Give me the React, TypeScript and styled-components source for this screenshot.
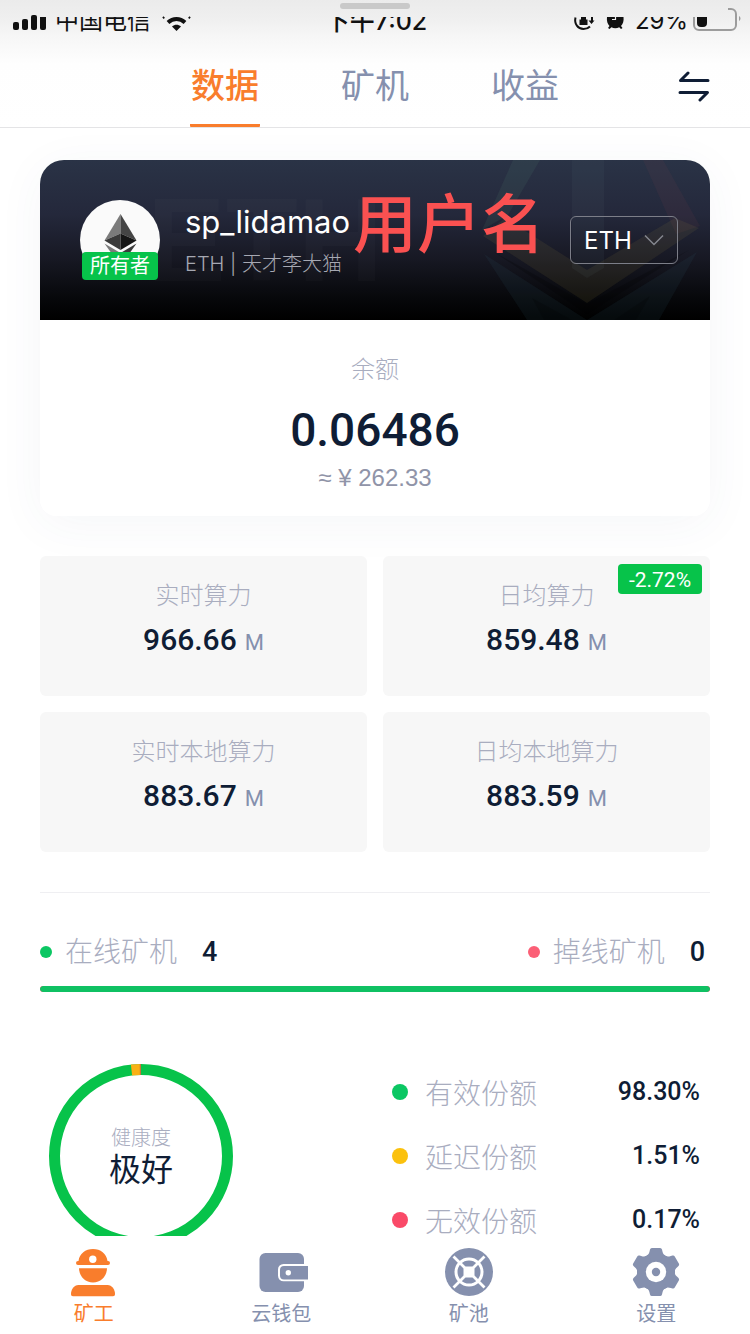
import React from "react";
import styled, { createGlobalStyle } from "styled-components";

const ink = "#0f1d35";
const slate = "#8590ae";
const pale = "#a9adbf";
const orange = "#f97d2c";
const green = "#07c34a";
const textFont = '"Inter", "Noto Sans CJK SC", sans-serif';
const numberFont = '"Roboto", "Noto Sans CJK SC", sans-serif';

const GlobalStyle = createGlobalStyle`
  * { box-sizing: border-box; }
  body {
    margin: 0;
    background: #fff;
    color: ${ink};
    font-family: ${textFont};
  }
  button, select { font: inherit; color: inherit; background: none; border: 0; padding: 0; margin: 0; }
  h1, p, dl, dd, dt { margin: 0; font-weight: 400; }
`;

const Page = styled.div`
  display: flex;
  flex-direction: column;
  height: 100vh;
`;

const Top = styled.header`
  flex: none;
  background: linear-gradient(#ebebeb 0, #efefef 18px, #f6f6f6 36px, #fefefe 64px, #fff 100%);
  border-bottom: 1px solid #e4e4e6;
`;

const Grabber = styled.div`
  width: 70px;
  height: 6px;
  margin: 0 auto;
  border-radius: 3px;
  background: #c9c9c9;
`;

const Sheet = styled.div`
  height: 17px;
  padding-top: 3px;
`;

const StatusBar = styled.div`
  display: grid;
  grid-template-columns: 1fr auto 1fr;
  height: 17px;
  padding: 0 10px 0 12px;
  font-size: 24px;
  line-height: 26px;
  color: #111;
`;

const StatusGroup = styled.div<{ $end?: boolean }>`
  display: flex;
  justify-content: ${(p) => (p.$end ? "flex-end" : "flex-start")};
  align-items: flex-end;
  gap: ${(p) => (p.$end ? 6 : 8)}px;
  height: 17px;
`;

const CutText = styled.span<{ $medium?: boolean }>`
  display: flex;
  align-items: flex-end;
  height: 17px;
  overflow: hidden;
  font-size: ${(p) => (p.$medium ? 25 : 24)}px;
  font-weight: ${(p) => (p.$medium ? 500 : 400)};
  white-space: nowrap;
`;

const StatusIcon = styled.svg`
  display: block;
  flex: none;
  overflow: visible;
`;

const TabRow = styled.div`
  display: grid;
  grid-template-columns: 1fr auto 1fr;
  height: 93px;
  padding: 0 40px;
`;

const Tabs = styled.nav`
  grid-column: 2;
  display: flex;
  gap: 80px;
`;

const Tab = styled.button<{ $active?: boolean }>`
  width: 70px;
  padding-top: 14px;
  border-bottom: 3px solid ${(p) => (p.$active ? orange : "transparent")};
  border-radius: 1px;
  color: ${(p) => (p.$active ? orange : slate)};
  font-size: 34px;
  font-weight: ${(p) => (p.$active ? 500 : 400)};
  line-height: 48px;
  white-space: nowrap;
`;

const SwapButton = styled.button`
  justify-self: end;
  display: flex;
  align-items: center;
  padding-top: 10px;
`;

const Main = styled.main`
  flex: 1;
  min-height: 0;
  overflow-y: auto;
  scrollbar-width: none;
  padding: 32px 40px 24px;
`;

const Card = styled.section`
  border-radius: 24px 24px 16px 16px;
  background: #fff;
  box-shadow: 0 8px 48px rgba(60, 70, 120, 0.05);
`;

const Banner = styled.div`
  position: relative;
  display: flex;
  align-items: center;
  height: 160px;
  padding: 0 32px 0 40px;
  overflow: hidden;
  border-radius: 24px 24px 0 0;
  background: linear-gradient(#2a3346 0, #24283b 34%, #171823 62%, #07080b 86%, #000 100%);
`;

const Watermark = styled.span`
  position: absolute;
  left: 107px;
  top: 20px;
  color: rgba(255, 255, 255, 0.018);
  font: 700 118px/120px "Liberation Sans", sans-serif;
`;

const BannerArt = styled.svg`
  position: absolute;
  right: 0;
  top: 0;
`;

const Avatar = styled.div`
  position: relative;
  flex: none;
  width: 80px;
  height: 80px;
  border-radius: 50%;
  background: #fafafa;
`;

const Coin = styled.svg`
  display: block;
`;

const Role = styled.span`
  position: absolute;
  left: 2px;
  bottom: 0;
  width: 76px;
  border-radius: 4px;
  background: ${green};
  color: #fff;
  font-size: 20px;
  line-height: 28px;
  text-align: center;
`;

const Identity = styled.div`
  position: relative;
  flex: 1;
  margin-left: 25px;
`;

const UserName = styled.h1`
  color: #fff;
  font-size: 31px;
  line-height: 40px;
`;

const Account = styled.p`
  margin-top: 8px;
  color: #a6a8b2;
  font-size: 20px;
  font-weight: 300;
  line-height: 28px;
`;

const Remark = styled.span`
  position: absolute;
  left: 313px;
  top: 26px;
  color: #fa5151;
  font-size: 64px;
  font-weight: 500;
  line-height: 76px;
`;

const CoinPicker = styled.label`
  position: relative;
  display: block;
  width: 108px;
  height: 48px;
  color: #fff;
`;

const CoinSelect = styled.select`
  appearance: none;
  width: 100%;
  height: 100%;
  padding-left: 13px;
  border: 1px solid #7c7e88;
  border-radius: 6px;
  font-size: 24px;
`;

const PickerArrow = styled.svg`
  position: absolute;
  right: 14px;
  top: 18px;
  pointer-events: none;
`;

const Balance = styled.dl`
  padding: 32px 0 24px;
  text-align: center;
`;

const Label = styled.dt`
  color: ${pale};
  font-size: 24px;
  font-weight: 300;
  line-height: 36px;
`;

const BalanceValue = styled.dd`
  margin-top: 14px;
  font: 500 46px/56px ${numberFont};
`;

const BalanceFiat = styled.dd`
  margin-top: 6px;
  color: #9094a8;
  font: 400 24px/28px "Liberation Sans", sans-serif;
`;

const Stats = styled.div`
  display: grid;
  grid-template-columns: 1fr 1fr;
  gap: 16px;
  margin-top: 40px;
`;

const StatCard = styled.dl`
  position: relative;
  height: 140px;
  padding-top: 22px;
  border-radius: 6px;
  background: #f7f7f7;
  text-align: center;
`;

const StatValue = styled.dd`
  margin-top: 6px;
  font: 500 30px/40px ${numberFont};
`;

const Unit = styled.span`
  margin-left: 8px;
  color: ${slate};
  font-size: 22px;
  font-weight: 400;
`;

const Change = styled.dd`
  position: absolute;
  right: 8px;
  top: 8px;
  width: 84px;
  border-radius: 4px;
  background: ${green};
  color: #fff;
  font: 400 21px/32px ${numberFont};
  height: 30px;
`;

const Rigs = styled.section`
  margin-top: 40px;
  padding-top: 38px;
  border-top: 1px solid #efeff2;
`;

const RigRow = styled.div`
  display: flex;
  justify-content: space-between;
  padding-right: 5px;
`;

const RigCount = styled.div`
  display: flex;
  align-items: center;
  font-size: 28px;
  line-height: 42px;
`;

const Dot = styled.i<{ $color: string; $size: number }>`
  width: ${(p) => p.$size}px;
  height: ${(p) => p.$size}px;
  border-radius: 50%;
  background: ${(p) => p.$color};
`;

const ItemLabel = styled.span<{ $gap: number }>`
  margin-left: ${(p) => p.$gap}px;
  color: ${pale};
  font-size: 28px;
  font-weight: 300;
`;

const Count = styled.span`
  margin-left: 25px;
  font: 500 27px/42px ${numberFont};
`;

const OnlineBar = styled.div`
  height: 6px;
  margin-top: 13px;
  border-radius: 3px;
  background: #fb5f76;
  overflow: hidden;
`;

const OnlineFill = styled.div`
  height: 100%;
  border-radius: 3px;
  background: #0fc163;
`;

const Health = styled.section`
  display: grid;
  grid-template-columns: 352px 1fr;
  margin-top: 68px;
`;

const Gauge = styled.div`
  position: relative;
  width: 184px;
  height: 184px;
  margin: 4px 0 0 9px;
`;

const GaugeText = styled.div`
  position: absolute;
  inset: 0;
  display: flex;
  flex-direction: column;
  align-items: center;
  padding-top: 60px;
`;

const GaugeLabel = styled.span`
  color: ${pale};
  font-size: 20px;
  font-weight: 300;
  line-height: 28px;
`;

const GaugeValue = styled.span`
  font-size: 32px;
  line-height: 36px;
`;

const ShareList = styled.div`
  padding-right: 10px;
`;

const ShareRow = styled.div`
  display: flex;
  align-items: center;
  height: 64px;
`;

const Percent = styled.span`
  margin-left: auto;
  font: 500 25px/42px ${numberFont};
`;

const BottomNav = styled.nav`
  flex: none;
  display: grid;
  grid-template-columns: repeat(4, 1fr);
  height: 98px;
  padding-top: 12px;
  background: #fff;
`;

const NavButton = styled.button<{ $active?: boolean }>`
  display: flex;
  flex-direction: column;
  align-items: center;
  gap: 4px;
  color: ${(p) => (p.$active ? orange : slate)};
  font-size: 20px;
  line-height: 28px;
`;

const NavIcon = styled.svg`
  display: block;
  overflow: visible;
`;

const MinerIcon = () => (
  <NavIcon width="48" height="48" viewBox="0 0 48 48" fill="currentColor">
    <path d="M8.500 13C9.500 5.500 15.500 1 23 1S36.500 5.500 37.500 13h.5a2 2 0 0 1 0 4H8a2 2 0 0 1 0-4Z" />
    <circle cx="22.800" cy="11.300" r="3.700" fill="#fff" />
    <path d="M9 20.300h28c-.3 8.200-6.200 14.200-14 14.200S9.300 28.500 9 20.300Z" />
    <path d="M8.500 37h29c4.500 0 7.500 4.500 7.500 9 0 1.500-.8 2.200-2 2.200H3c-1.300 0-2-.7-2-2.200C1 41.500 4 37 8.500 37Z" />
  </NavIcon>
);

const WalletIcon = () => (
  <NavIcon width="48" height="48" viewBox="0 0 48 48" fill="currentColor">
    <rect x="2.500" y="5" width="44.500" height="39" rx="6" />
    <path d="M51 16H26.500a5.500 5.500 0 0 0-5.500 5.500v6.300a5.500 5.500 0 0 0 5.500 5.500H51Z" fill="#fff" />
    <path d="M51 18H27a4 4 0 0 0-4 4v5.400a4 4 0 0 0 4 4h24Z" />
    <circle cx="31.300" cy="24.700" r="2.700" fill="#fff" />
  </NavIcon>
);

const PoolIcon = () => (
  <NavIcon width="48" height="48" viewBox="0 0 48 48" fill="none" stroke="#fff">
    <circle cx="24" cy="24" r="24" fill="currentColor" stroke="none" />
    <circle cx="24" cy="24" r="13" strokeWidth="3" />
    <path d="M8.500 8.500l31 31M39.500 8.500l-31 31" strokeWidth="2.800" />
    <rect x="19" y="19" width="10" height="10" rx="2" fill="#fff" />
  </NavIcon>
);

const GearIcon = () => (
  <NavIcon width="48" height="48" viewBox="0 0 48 48" fill="currentColor">
    <circle cx="24" cy="24" r="19" />
    {[0, 60, 120, 180, 240, 300].map((angle) => (
      <path
        key={angle}
        d="M13 8.500c3.200-1 4-2.500 4.600-5.300L18 1.500Q18.400 0 19.900 0h8.200q1.500 0 1.900 1.500l.4 1.700c.6 2.800 1.400 4.300 4.600 5.300L30 16H18Z"
        transform={`rotate(${angle} 24 24)`}
      />
    ))}
    <circle cx="24" cy="24" r="10.200" fill="#fff" />
    <circle cx="24" cy="24" r="4.200" />
  </NavIcon>
);

const stats = [
  { label: "实时算力", value: "966.66" },
  { label: "日均算力", value: "859.48", change: "-2.72%" },
  { label: "实时本地算力", value: "883.67" },
  { label: "日均本地算力", value: "883.59" },
];

const shares = [
  { label: "有效份额", value: "98.30%", color: "#0bc763" },
  { label: "延迟份额", value: "1.51%", color: "#fbc10d" },
  { label: "无效份额", value: "0.17%", color: "#fa4a68" },
];

const navItems = [
  { label: "矿工", Icon: MinerIcon },
  { label: "云钱包", Icon: WalletIcon },
  { label: "矿池", Icon: PoolIcon },
  { label: "设置", Icon: GearIcon },
];

export default function App() {
  const online = 4;
  const offline = 0;
  return (
    <Page>
      <GlobalStyle />
      <Top>
        <Sheet>
          <Grabber />
        </Sheet>
        <StatusBar>
          <StatusGroup>
            <StatusIcon width="35" height="17" viewBox="0 0 35 17" fill="#111">
              <rect x="1" y="5" width="6" height="8" rx="2" />
              <rect x="10" y="2" width="6" height="11" rx="2" />
              <rect x="19" y="-2" width="6" height="15" rx="2" />
              <path d="M28 0h6v11a2 2 0 0 1-2 2h-2a2 2 0 0 1-2-2Z" />
            </StatusIcon>
            <CutText>中国电信</CutText>
            <StatusIcon width="36" height="17" viewBox="-4 0 36 17" fill="none" stroke="#111">
              <path d="M0 1.200l1.200-1.200M27 1.200L25.800 0" strokeWidth="2" />
              <path d="M5 5.500c5-4.600 12-4.600 17 0" strokeWidth="4" />
              <path d="M9 9.600c2.700-2.400 6.300-2.400 9 0L13.500 14Z" fill="#111" stroke="none" />
            </StatusIcon>
          </StatusGroup>
          <CutText $medium>下午7:02</CutText>
          <StatusGroup $end>
            <StatusIcon width="22" height="17" viewBox="0 0 22 17" fill="none" stroke="#111" strokeWidth="2">
              <path d="M2.500 .5C1 7 5 12 10.500 12c3 0 5-1 6.500-2.500" />
              <path d="M6.500 2.500h8V8h-8ZM8 2.500V0h5v2.500" fill="#111" stroke="none" />
              <path d="M15.500 3.500h6L18.500 7ZM18 0h2v4h-2Z" fill="#111" stroke="none" />
            </StatusIcon>
            <StatusIcon width="28" height="17" viewBox="-5 0 28 17" fill="#111">
              <path d="M1 0h16.500c.5 4-.5 7-2.500 9l1.500 2-1.500 1-1.800-1.800c-2.500 1.400-5.300 1.400-7.800 0L3.600 12 2 11l1.500-2C1.500 7 .5 4 1 0Z" />
              <path d="M9.500 0v2.500H6" fill="none" stroke="#efefef" strokeWidth="1.200" />
            </StatusIcon>
            <CutText>29%</CutText>
            <StatusIcon width="46" height="17" viewBox="1 0 46 17">
              <path d="M1 0v8a5 5 0 0 0 5 5h32a5 5 0 0 0 5-5V-3a5 5 0 0 0-5-5h-3" fill="none" stroke="#9c9c9c" strokeWidth="2" />
              <path d="M4 0h10v6a4 4 0 0 1-4 4H8a4 4 0 0 1-4-4Z" fill="#111" />
              <path d="M46-1c2 1 2 4 0 5Z" fill="#9c9c9c" />
            </StatusIcon>
          </StatusGroup>
        </StatusBar>
        <TabRow>
          <Tabs>
            <Tab $active>数据</Tab>
            <Tab>矿机</Tab>
            <Tab>收益</Tab>
          </Tabs>
          <SwapButton aria-label="切换">
            <svg width="32" height="32" viewBox="0 0 32 32" fill="none" stroke={ink} strokeWidth="3" strokeLinecap="round" strokeLinejoin="round">
              <path d="M30 10.500H2.500L10 3M2 22.500h27.500L22 30" />
            </svg>
          </SwapButton>
        </TabRow>
      </Top>

      <Main>
        <Card>
          <Banner>
            <Watermark aria-hidden="true">ETH</Watermark>
            <BannerArt width="230" height="160" viewBox="0 0 230 160">
              <g fillOpacity="0.1">
                <path d="M33 0h27L28 55l-26 15Z" fill="#5f9a80" />
                <path d="M92 0h32v108l-17 10-15-10Z" fill="#5c6a78" />
                <path d="M163 0h20l37 66-24 8Z" fill="#8a4850" />
                <path d="M3 76l22-18 82 52 88-52 24 10-112 75Z" fill="#a89040" />
                <path d="M4 94l103 66 110-68-38 68H47Z" fill="#3c6f80" />
              </g>
              <path d="M14 92l93 62 102-64-102 54ZM64 160l-12-22 40 22ZM134 160l36-24-14 24Z" fill="#000" fillOpacity="0.2" />
            </BannerArt>
            <Avatar>
              <Coin width="80" height="80" viewBox="0 0 80 80">
                <path d="M40.500 14L24.500 40.500l16-7Z" fill="#7b7b7b" />
                <path d="M40.500 14l16 26.500-16-7Z" fill="#454545" />
                <path d="M24.500 40.500l16-7V50Z" fill="#3a3a3a" />
                <path d="M56.500 40.500l-16-7V50Z" fill="#161616" />
                <path d="M24.500 43.500l16 9.500v13Z" fill="#7b7b7b" />
                <path d="M56.500 43.500l-16 9.500v13Z" fill="#3a3a3a" />
              </Coin>
              <Role>所有者</Role>
            </Avatar>
            <Identity>
              <UserName>sp_lidamao</UserName>
              <Account>ETH | 天才李大猫</Account>
            </Identity>
            <Remark>用户名</Remark>
            <CoinPicker>
              <CoinSelect aria-label="币种" defaultValue="ETH">
                <option>ETH</option>
              </CoinSelect>
              <PickerArrow width="20" height="12" viewBox="0 0 20 12" fill="none" stroke="#85878f" strokeWidth="1.500">
                <path d="M1 1.500l9 9 9-9" />
              </PickerArrow>
            </CoinPicker>
          </Banner>
          <Balance>
            <Label>余额</Label>
            <BalanceValue>0.06486</BalanceValue>
            <BalanceFiat>≈ ¥ 262.33</BalanceFiat>
          </Balance>
        </Card>

        <Stats>
          {stats.map((s) => (
            <StatCard key={s.label}>
              <Label>{s.label}</Label>
              <StatValue>
                {s.value}
                <Unit>M</Unit>
              </StatValue>
              {s.change && <Change>{s.change}</Change>}
            </StatCard>
          ))}
        </Stats>

        <Rigs>
          <RigRow>
            <RigCount>
              <Dot $color="#0bc763" $size={12} />
              <ItemLabel $gap={13}>在线矿机</ItemLabel>
              <Count>{online}</Count>
            </RigCount>
            <RigCount>
              <Dot $color="#fb5f76" $size={12} />
              <ItemLabel $gap={13}>掉线矿机</ItemLabel>
              <Count>{offline}</Count>
            </RigCount>
          </RigRow>
          <OnlineBar>
            <OnlineFill style={{ width: `${(online / (online + offline)) * 100}%` }} />
          </OnlineBar>
        </Rigs>

        <Health>
          <Gauge>
            <svg width="184" height="184" viewBox="0 0 184 184" fill="none" strokeWidth="11">
              <circle cx="92" cy="92" r="86.500" stroke={green} />
              <path d="M82.500 6.020A86.500 86.500 0 0 1 91.500 5.500" stroke="#f9b115" />
              <path d="M90.800 5.510A86.500 86.500 0 0 1 92 5.500" stroke="#c8743a" />
            </svg>
            <GaugeText>
              <GaugeLabel>健康度</GaugeLabel>
              <GaugeValue>极好</GaugeValue>
            </GaugeText>
          </Gauge>
          <ShareList>
            {shares.map((s) => (
              <ShareRow key={s.label}>
                <Dot $color={s.color} $size={16} />
                <ItemLabel $gap={17}>{s.label}</ItemLabel>
                <Percent>{s.value}</Percent>
              </ShareRow>
            ))}
          </ShareList>
        </Health>
      </Main>

      <BottomNav>
        {navItems.map(({ label, Icon }, i) => (
          <NavButton key={label} $active={i === 0}>
            <Icon />
            {label}
          </NavButton>
        ))}
      </BottomNav>
    </Page>
  );
}
